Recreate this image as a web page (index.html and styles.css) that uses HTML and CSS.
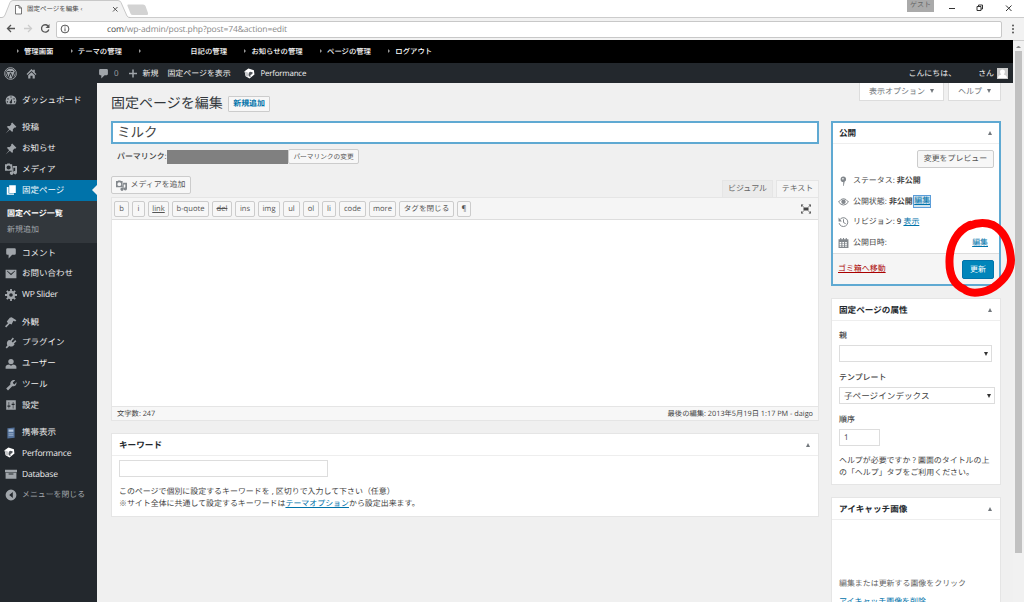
FILE: index.html
```html
<!DOCTYPE html>
<html lang="ja">
<head>
    <meta charset="UTF-8">
    <meta name="viewport" content="width=device-width, initial-scale=1.0">
    <title>固定ページを編集</title>
    <link rel="stylesheet" href="styles.css">
</head>
<body>
    <svg width="0" height="0" class="sprite">
        <symbol id="pin" viewBox="0 0 20 20"><path d="M12 1l7 7-2 1.500-1-.5-3 3c.7 2 0 3.500-1 4.500l-4-3.500-7 6 6-7-4-4c1-1 3-1.500 4.500-1l3-3L10 3z"/></symbol>
        <symbol id="media" viewBox="0 0 20 20"><path fill-rule="evenodd" d="M0 2h3l1-1h4l1 1h3v11H0zM6 4a3.500 3.500 0 1 0 0 7 3.500 3.500 0 0 0 0-7zM13 5h7v11a3 3 0 1 1-3-3V8h-3v9a3 3 0 1 1-4-3h2z"/></symbol>
        <symbol id="comment" viewBox="0 0 20 20"><path d="M4 2h12q2 0 2 2v7q0 2-2 2h-4l-6 6v-6H4q-2 0-2-2V4q0-2 2-2z"/></symbol>
        <symbol id="cube" viewBox="0 0 20 20"><path fill="#fff" d="M1 6l7-5 10 3 1 8-9 7-7-4z"/><path fill="#50555a" d="M9 8l3-1 4 1-1 3-4 2 2 2-3 1-2-3z"/><path fill="#c7c9cb" d="M1 6l6 2 1 8-5-2z"/></symbol>
    </svg>

    <div class="tabstrip">
        <svg class="tab-shape" width="150" height="19" viewBox="0 0 150 19">
            <path d="M0 17.500H2Q4 17.500 5 15L10 2.500Q11 .5 13 .5H118Q120 .5 121 2.500L127 16Q128 17.500 130 17.500V19H0z" fill="#f2f2f2" stroke="#bbb" stroke-width=".8"/>
            <path d="M0 18.500H150" stroke="#f2f2f2"/>
            <path d="M128 4.500h15q2 0 2.500 1.500l2.500 7q.5 2-1 2h-14q-2 0-2.500-1.500l-3-7.500q-.5-1.500.5-1.500z" fill="#d3d3d3"/>
            <path d="M15.500 5.500h3.500l2.500 2.500v6h-6zM19 5.500V8h2.500" fill="#fff" stroke="#555" stroke-width=".8"/>
            <path d="M113 7l4.500 4.500M117.500 7l-4.500 4.500" stroke="#555" stroke-width="1"/>
        </svg>
        <span class="tab-title">固定ページを編集 ‹</span>
        <span class="guest">ゲスト</span>
        <svg class="win" width="80" height="16" viewBox="0 0 80 16" fill="none" stroke="#333">
            <path d="M7 8.500h6M64 5.500l5.500 5.500M69.500 5.500l-5.500 5.500"/><path d="M35 6.500h4v4h-4zM36.500 6V5h4v4h-1.500"/>
        </svg>
    </div>
    <div class="toolbar">
        <svg width="56" height="22" viewBox="0 0 56 22" fill="none" stroke="#555" stroke-width="1.300">
            <path d="M15 10.500H7.500M11 7l-3.500 3.500L11 14"/><path stroke="#ccc" d="M24 10.500h7.500M28 7l3.500 3.500L28 14"/>
            <path d="M48 8a3.700 3.700 0 1 0 .8 3.500"/><path fill="#555" stroke="none" d="M49.500 6v4h-4z"/>
        </svg>
        <div class="url">
            <svg width="10" height="10" viewBox="0 0 10 10" fill="none" stroke="#555"><circle cx="5" cy="5" r="3.900"/><path d="M5 4.300v3M5 2.500v1"/></svg>
            <span class="address"><b>com</b>/wp-admin/post.php?post=74&amp;action=edit</span>
        </div>
        <svg width="22" height="22" viewBox="0 0 22 22" fill="#555"><circle cx="11" cy="7.500" r="1"/><circle cx="11" cy="11" r="1"/><circle cx="11" cy="14.500" r="1"/></svg>
    </div>

    <div class="window">
        <div class="page">
            <ul class="site-nav">
                <li>管理画面</li>
                <li>テーマの管理</li>
                <li class="blank">日記の管理</li>
                <li>お知らせの管理</li>
                <li>ページの管理</li>
                <li>ログアウト</li>
            </ul>
            <div class="adminbar">
                <svg class="wp" viewBox="0 0 20 20"><circle cx="10" cy="10" r="9" fill="none" stroke="#a0a5aa" stroke-width="1.500"/><circle cx="10" cy="10" r="7.500" fill="#a0a5aa"/><path d="M3 7l4 10 3-8 3.500 8L17 7M5 7h4M10 7h4" fill="none" stroke="#23282d" stroke-width="1.500"/></svg>
                <svg class="home" viewBox="0 0 20 20"><path d="M10 2l3 3V3h3v5l3 3-1.500 1.500L10 5.500l-7.500 7L1 11zM4 13l6-5.500 6 5.500v6h-4v-5H8v5H4z"/></svg>
                <svg class="bubble"><use href="#comment"/></svg>
                <span class="count">0</span>
                <svg class="plus" viewBox="0 0 20 20"><path d="M8.500 2h3v6.500H18v3h-6.500V18h-3v-6.500H2v-3h6.500z"/></svg>
                <span class="new">新規</span>
                <span class="view">固定ページを表示</span>
                <svg class="perf"><use href="#cube"/></svg>
                <span class="latin">Performance</span>
                <span class="hello">こんにちは、</span>
                <span class="san">さん</span>
                <svg class="avatar" viewBox="0 0 11 11"><path fill="#ccc" d="M0 0h11v11H0z"/><path fill="#fff" d="M5.500 1.500c3.500 0 2.500 4 1.200 5 2 .5 3.300 1.500 3.300 3.500H1c0-2 1.300-3 3.300-3.500-1.300-1-2.300-5 1.200-5z"/></svg>
            </div>
            <div class="body">
                <ul class="menu">
                    <li><svg viewBox="0 0 20 20"><path fill-rule="evenodd" d="M3 17a9 9 0 1 1 14 0zM9 4v2h2V4zM4 7v2h2V7zM14 7v2h2V7zM3 12v2h2v-2zM15 12v2h2v-2zM12 7l-3 5a2 2 0 1 0 2.500 1z"/></svg>ダッシュボード</li>
                    <li class="gap"><svg><use href="#pin"/></svg>投稿</li>
                    <li><svg><use href="#pin"/></svg>お知らせ</li>
                    <li><svg><use href="#media"/></svg>メディア</li>
                    <li class="current"><svg viewBox="0 0 20 20"><path d="M7 2h11v13H7zM3 5h3v11h9v2H3z"/></svg>固定ページ</li>
                    <li class="sub"><b>固定ページ一覧</b><span>新規追加</span></li>
                    <li><svg><use href="#comment"/></svg>コメント</li>
                    <li><svg viewBox="0 0 20 20"><path fill-rule="evenodd" d="M1 3h18v14H1zM3 5l7 7 7-7-1-.5-6 5-6-5z"/></svg>お問い合わせ</li>
                    <li class="latin"><svg viewBox="0 0 20 20"><circle cx="10" cy="10" r="5" fill="none" stroke="#a0a5aa" stroke-width="4"/><path d="M10 0v4M10 16v4M0 10h4M16 10h4M3 3l3 3M14 14l3 3M3 17l3-3M14 6l3-3" stroke="#a0a5aa" stroke-width="3"/></svg>WP Slider</li>
                    <li class="gap"><svg viewBox="0 0 20 20"><path d="M8 3l3-1 8 5-2 2-3-1-3 6-3-1-6 6-2-2 5-5-2-3z"/></svg>外観</li>
                    <li><svg viewBox="0 0 20 20"><path d="M13 1l2 2-4 4 2 2 4-4 2 2-4 4 1 1c-2 4-6 5-9 3l-4 4-2-2 3-3C2 10 4 6 7 5l2 1z"/></svg>プラグイン</li>
                    <li><svg viewBox="0 0 20 20"><circle cx="10" cy="6" r="4.500"/><path d="M1 18v-4q1-3 6-3l3 2 3-2q5 0 6 3v4z"/></svg>ユーザー</li>
                    <li><svg viewBox="0 0 20 20"><path d="M17 2l-4 4 1 2 2 1 3-4c1 5-3 8-7 7l-7 7-3-3 7-7c-1-4 3-8 8-7z"/></svg>ツール</li>
                    <li><svg viewBox="0 0 20 20"><path fill-rule="evenodd" d="M2 2h16v16H2zM6 5v6H4v2h2v3h1v-3h2v-2H7V5zM13 5v3h-2v2h2v6h1v-6h2V8h-2V5z"/></svg>設定</li>
                    <li class="gap"><svg viewBox="0 0 20 20"><path fill="#54729b" d="M4 2l12-1v17l-12 1z"/><path fill="#b5c8de" d="M6 4h8v4H6zM6 11h8v1H6zM6 14h8v1H6z"/></svg>携帯表示</li>
                    <li class="latin"><svg class="cube"><use href="#cube"/></svg>Performance</li>
                    <li class="latin"><svg viewBox="0 0 20 20"><path fill-rule="evenodd" d="M0 3h20v4H0zM1 8h18v10H1zM6 9v2h8V9z"/></svg>Database</li>
                    <li class="collapse"><svg viewBox="0 0 20 20"><path fill-rule="evenodd" d="M10 1a9 9 0 1 0 0 18 9 9 0 0 0 0-18zM13 5v10l-6-5z"/></svg>メニューを閉じる</li>
                </ul>

                <div class="content">
                    <div class="left">
                        <div class="heading"><h1>固定ページを編集</h1><a class="add-new">新規追加</a></div>
                        <div class="title">ミルク</div>
                        <div class="permalink"><span>パーマリンク:</span><i></i><a class="btn">パーマリンクの変更</a></div>
                        <div class="editor-top">
                            <a class="btn add-media"><svg><use href="#media"/></svg>メディアを追加</a>
                            <span class="tab visual">ビジュアル</span><span class="tab text">テキスト</span>
                        </div>
                        <div class="editor">
                            <div class="quicktags">
                                <a style="width:15px">b</a><a style="width:13px">i</a><a style="width:21px"><u>link</u></a><a style="width:37px">b-quote</a><a style="width:20px"><s>del</s></a><a style="width:20px">ins</a><a style="width:22px">img</a><a style="width:17px">ul</a><a style="width:16px">ol</a><a style="width:14px">li</a><a style="width:27px">code</a><a style="width:27px">more</a><a class="close-tag">タグを閉じる</a><a style="width:14px">¶</a>
                                <svg width="12" height="10" viewBox="0 0 12 10"><path d="M3.500 3.500h5v3h-5zM1 .5h2.500L1 3zM11 .5H8.500L11 3zM1 9.500h2.500L1 7zM11 9.500H8.500L11 7z"/><path d="M1.500 1l2.500 2.500M10.500 1L8 3.500M1.500 9L4 6.500M10.500 9L8 6.500" stroke="#777"/></svg>
                            </div>
                            <div class="textarea"></div>
                            <div class="status"><span>文字数: 247</span><span>最後の編集: 2013年5月19日 1:17 PM - daigo</span></div>
                        </div>
                        <div class="box keyword">
                            <h2>キーワード<em></em></h2>
                            <div class="input"></div>
                            <p>このページで個別に設定するキーワードを , 区切りで入力して下さい（任意）<br>※サイト全体に共通して設定するキーワードは<a>テーマオプション</a>から設定出来ます。</p>
                        </div>
                    </div>

                    <div class="right">
                        <div class="screen-meta"><span class="options">表示オプション<em></em></span><span class="help">ヘルプ<em></em></span></div>
                        <div class="box publish">
                            <h2>公開<em></em></h2>
                            <div class="preview"><a class="btn">変更をプレビュー</a></div>
                            <div class="row"><svg viewBox="0 0 20 20"><path d="M10 2a5 5 0 0 1 2 9.500L10.500 19h-1V12A5 5 0 0 1 10 2z"/><circle cx="9" cy="6" r="1.500" fill="#fff"/></svg>ステータス:&nbsp;<b>非公開</b></div>
                            <div class="row"><svg viewBox="0 0 20 20"><path d="M1 10q9-12 18 0-9 11-18 0z" fill="none" stroke="#82878c" stroke-width="1.800"/><circle cx="10" cy="9.500" r="4"/></svg>公開状態:&nbsp;<b>非公開</b><a class="focused">編集</a></div>
                            <div class="row"><svg viewBox="0 0 20 20"><path d="M3 6a8 8 0 1 1-1 6M10 5v6l4 2" fill="none" stroke="#82878c" stroke-width="1.800"/><path d="M1 2v7h6z"/></svg>リビジョン:&nbsp;<b class="num">9</b>&nbsp;<a>表示</a></div>
                            <div class="row"><svg viewBox="0 0 20 20"><path fill-rule="evenodd" d="M1 3h3V1h2v2h3V1h2v2h3V1h2v2h3v16H1zM3 8v2h3V8zM8 8v2h3V8zM13 8v2h3V8zM3 11v3h3v-3zM8 11v3h3v-3zM13 11v3h3v-3zM3 15v2h3v-2zM8 15v2h3v-2zM13 15v2h3v-2z"/></svg>公開日時:<a class="edit-date">編集</a></div>
                            <div class="actions"><a class="trash">ゴミ箱へ移動</a><a class="update">更新</a></div>
                        </div>
                        <div class="box attributes">
                            <h2>固定ページの属性<em></em></h2>
                            <label>親</label>
                            <div class="select parent"><em></em></div>
                            <label>テンプレート</label>
                            <div class="select">子ページインデックス<em></em></div>
                            <label>順序</label>
                            <div class="order">1</div>
                            <p>ヘルプが必要ですか ? 画面のタイトルの上<br>の「ヘルプ」タブをご利用ください。</p>
                        </div>
                        <div class="box thumbnail">
                            <h2>アイキャッチ画像<em></em></h2>
                            <p>編集または更新する画像をクリック</p>
                            <a>アイキャッチ画像を削除</a>
                        </div>
                    </div>
                </div>
            </div>
        </div>
        <div class="scrollbar"><em></em><div class="thumb"></div></div>
    </div>
    <svg class="mark" width="74" height="84" viewBox="0 0 74 84"><path d="M27 9C14 15 7 28 6.500 44C6 60 12 69 21 73C27 79 42 77 51 71C61 64 68 55 68 44C67 28 61 15 50 9C42 6 33 7 26 10"/></svg>
</body>
</html>
```
FILE: styles.css
```css
*{
    box-sizing: border-box;
    margin:0;
    padding:0;
}
body{
    width:1024px;
    height:602px;
    overflow: hidden;
    background: #f0f0f0;
    color:#444;
    font-family: "Open Sans","Noto Sans CJK JP",sans-serif;
    font-size:7.95px;
    line-height: 14px;
    white-space: nowrap;
    text-rendering: geometricPrecision;
}
ul{
    list-style-type: none;
}
svg{
    flex:none;
}
a{
    color:#0073aa;
    text-decoration: underline;
}
.sprite{
    position: absolute;
}
.latin{
    letter-spacing: -.2px;
}
/* browser */
.tabstrip{
    display: flex;
    height:18px;
    background: #fff;
    border-bottom: 1px solid #ccc;
}
.tab-shape{
    margin-right: -123px;
}
.tab-title{
    position: relative;
    width:882px;
    font-size:6.5px;
    line-height: 18px;
}
.guest{
    width:27px;
    height:12px;
    margin-left: -2px;
    background: #aaa;
    color:#666;
    font-size:7px;
    line-height: 11px;
    text-align: center;
}
.win{
    margin-left: 8px;
}
.toolbar{
    display: flex;
    align-items: center;
    height:22px;
    background: #f2f2f2;
}
.url{
    display: flex;
    align-items: center;
    width:946px;
    height:17px;
    padding-left:3px;
    background: #fff;
    border: 1px solid #c8c8c8;
    border-radius: 2px;
}
.address{
    margin-left: 37px;
    padding-top: 1px;
    color:#888;
    font-size:8.5px;
    letter-spacing: -.11px;
}
.address b{
    color:#444;
    font-weight: normal;
}
.window{
    display: flex;
    height:562px;
}
.page{
    width:1013px;
}
.scrollbar{
    width:11px;
    padding:5px 2px 0;
    background: #f1f1f1;
    border-top: 1px solid #ccc;
}
.scrollbar em{
    display: block;
    margin:0 1px 3px;
    border: 2px solid transparent;
    border-top: 0;
    border-bottom: 2px solid #888;
}
.thumb{
    height:502px;
    background: #c1c1c1;
}
/* black nav */
.site-nav{
    display: flex;
    gap:17.4px;
    height:23px;
    padding-left:17px;
    background: #000;
    color:#fff;
    font-size:7.35px;
    font-weight: 500;
    line-height: 24px;
}
.site-nav li::before{
    content:"";
    display: inline-block;
    margin-right: 5px;
    border: 2px solid transparent;
    border-left: 2px solid #999;
    border-right: 0;
    vertical-align: 1px;
}
.site-nav .blank::before{
    margin-right: 49px;
}
.adminbar{
    display: flex;
    align-items: center;
    height:20px;
    background: #23282d;
    color:#eee;
    fill:#a0a5aa;
}
.adminbar span{
    padding-top: 1px;
}
.adminbar svg{
    width:11px;
    height:11px;
}
.adminbar .wp{
    width:13px;
    height:13px;
    margin-left:4px;
}
.adminbar .home{
    margin-left: 9px;
}
.adminbar .bubble{
    margin-left: 61px;
}
.count{
    width:12px;
    margin-left: 5px;
    color:#a0a5aa;
}
.adminbar .plus{
    width:10px;
    margin-left: 2px;
}
.new{
    margin-left: 4.5px;
}
.view{
    width:77px;
    margin-left: 9px;
}
.perf{
    margin-right: 5px;
}
.hello{
    margin-left: auto;
}
.san{
    margin:0 3px 0 22px;
}
.avatar{
    margin-right: 5px;
}
.body{
    display: flex;
    height:519px;
}
/* side menu */
.menu{
    width:97px;
    padding-top: 7px;
    background: #23282d;
    color:#eee;
    font-size:8.5px;
    line-height: 15px;
    fill:#a0a5aa;
}
.menu li{
    display: flex;
    align-items: center;
    height:20.8px;
    padding-left:5px;
}
.menu svg{
    width:12px;
    height:12px;
    margin-right: 5px;
}
.menu .cube{
    width:11px;
    height:11px;
    margin:0 7px 2px -1px;
}
.menu .gap{
    margin-top: 6.7px;
}
.menu .current{
    position: relative;
    background: #0073aa;
    color:#fff;
    fill:#fff;
}
.current::after{
    content:"";
    position: absolute;
    right:0;
    top:5.500px;
    border: 5px solid transparent;
    border-left: 0;
    border-right: 5px solid #f1f1f1;
}
.menu .sub{
    display: block;
    height:42px;
    padding:5px 7px;
    background: #32373c;
    font-size:8px;
    line-height: 16.5px;
}
.sub b,.sub span{
    display: block;
}
.sub b{
    color:#fff;
}
.sub span,.menu .collapse{
    color:#a0a5aa;
}
.menu .collapse{
    font-size:7.9px;
}
/* content */
.content{
    display: flex;
    gap:12px;
    padding-left:14px;
}
.left{
    width:708px;
}
.right{
    width:170px;
}
.heading{
    display: flex;
    align-items: center;
    height:38px;
    padding-top: 4px;
}
h1{
    color:#32373c;
    font-size:14px;
    font-weight: normal;
    line-height: 16px;
}
.add-new{
    margin-left: 5px;
    padding:0 4.5px;
    border: 1px solid #ccc;
    border-radius: 1px;
    background: #f7f7f7;
    font-weight: bold;
    text-decoration: none;
}
.title{
    height:23px;
    padding-left:4px;
    border: 2px solid #5fa9d2;
    background: #fff;
    font-size:13.5px;
    line-height: 18px;
}
.permalink{
    display: flex;
    align-items: center;
    height:15px;
    margin-top: 5px;
    padding-left:6px;
}
.permalink span{
    width:50px;
    font-weight: 500;
}
.permalink i{
    width:121px;
    height:14px;
    background: #808080;
}
.btn{
    display: flex;
    align-items: center;
    justify-content: center;
    border: 1px solid #ccc;
    border-radius: 2px;
    background: #f7f7f7;
    color:#555;
    text-decoration: none;
}
.permalink .btn{
    width:71px;
    height:15px;
    font-size:6.7px;
}
.editor-top{
    display: flex;
    align-items: flex-end;
    height:33px;
}
.add-media{
    width:80px;
    height:18px;
    margin:0 auto 3px 0;
}
.add-media svg{
    width:11px;
    height:11px;
    margin-right: 3px;
    fill:#82878c;
}
.tab{
    height:17px;
    border: 1px solid #e5e5e5;
    border-bottom: 0;
    color:#666;
    line-height: 17px;
    text-align: center;
}
.visual{
    width:51px;
    margin-right: 3px;
    background: #ebebeb;
}
.text{
    width:43px;
    background: #f5f5f5;
}
.editor{
    height:224px;
    border: 1px solid #e5e5e5;
}
.quicktags{
    display: flex;
    gap:3px;
    height:22px;
    padding:3px 5px 3px 2px;
    background: #f5f5f5;
    border-bottom: 1px solid #ddd;
}
.quicktags a{
    height:16px;
    border: 1px solid #ccc;
    border-radius: 2px;
    background: #f7f7f7;
    color:#555;
    font-size:7.6px;
    line-height: 15px;
    text-align: center;
    text-decoration: none;
}
.quicktags .close-tag{
    width:55px;
}
.quicktags svg{
    margin:3px 1px 0 auto;
    fill:#444;
}
.textarea{
    height:186px;
    background: #fff;
}
.status{
    display: flex;
    justify-content: space-between;
    height:14px;
    padding:0 5px;
    border-top: 1px solid #e5e5e5;
    background: #f7f7f7;
    font-size:7.3px;
    line-height: 15px;
}
.box{
    border: 1px solid #e5e5e5;
    background: #fff;
}
h2{
    display: flex;
    align-items: center;
    justify-content: space-between;
    height:22px;
    padding:0 8px 0 7px;
    border-bottom: 1px solid #eee;
    color:#23282d;
    font-size:8.6px;
    font-weight: bold;
    line-height: 12px;
}
h2 em{
    border: 2.500px solid transparent;
    border-top: 0;
    border-bottom: 4px solid #72777c;
}
.keyword{
    height:84px;
    margin-top: 12px;
}
.input{
    width:209px;
    height:17px;
    margin:4px 7px 9px;
    border: 1px solid #ddd;
}
.keyword p{
    padding-left:7px;
    line-height: 12px;
}
.screen-meta{
    display: flex;
    gap:4px;
    justify-content: flex-end;
    height:38px;
}
.screen-meta span{
    height:18px;
    border: 1px solid #ddd;
    border-top: 0;
    background: #fff;
    color:#72777c;
    font-size:8px;
    line-height: 18px;
    text-align: center;
}
.screen-meta .options{
    width:85px;
}
.screen-meta .help{
    width:53px;
}
.screen-meta em,.select em{
    display: inline-block;
    border: 2.500px solid transparent;
    border-top: 4px solid #72777c;
    border-bottom: 0;
}
.screen-meta em{
    margin-left: 5px;
    vertical-align: 1px;
}
/* publish */
.publish{
    height:165px;
    border: 2px solid #5fa9d2;
}
.publish h2{
    height:21px;
    padding:0 7px 0 6px;
}
.preview{
    height:26px;
    padding:6px 5px 0 0;
}
.preview .btn{
    width:77px;
    height:18px;
    margin-left: auto;
}
.row{
    display: flex;
    align-items: center;
    height:20.7px;
    padding:1px 7px 0 5px;
}
.row svg{
    width:11px;
    height:12px;
    margin-right: 4px;
    fill:#82878c;
}
.focused{
    height:11px;
    margin-left: 1.5px;
    background: #d3e4ef;
    line-height: 11px;
    outline: 1px solid #5b9dd9;
}
.row .num{
    font-weight: 600;
}
.edit-date{
    margin-left: auto;
    margin-right: 4px;
}
.actions{
    display: flex;
    align-items: center;
    justify-content: space-between;
    height:31px;
    padding:1px 5px 0;
    border-top: 1px solid #ddd;
    background: #f5f5f5;
}
.trash{
    color:#a00;
}
.update{
    width:32px;
    height:19px;
    border: 1px solid #0073aa;
    border-radius: 2px;
    background: #0085ba;
    color:#fff;
    line-height: 18px;
    text-align: center;
    text-decoration: none;
}
.attributes{
    height:187px;
    margin-top: 12px;
}
.attributes h2{
    margin-bottom: 8px;
}
label{
    display: block;
    height:16px;
    padding-left:7px;
    font-weight: 500;
}
.select{
    display: flex;
    align-items: center;
    justify-content: space-between;
    width:156px;
    height:17px;
    margin:0 0 9px 7px;
    padding:0 3px 0 4px;
    border: 1px solid #ddd;
    font-size:8.6px;
    line-height: 12px;
}
.parent{
    width:153px;
}
.select em{
    margin-left: auto;
    border-top-color: #333;
}
.order{
    width:41px;
    height:17px;
    margin:0 0 9px 7px;
    padding-left:4px;
    border: 1px solid #ddd;
    line-height: 16px;
}
.attributes p{
    padding-left:7px;
    line-height: 12px;
}
.thumbnail{
    height:120px;
    margin-top: 12px;
}
.thumbnail p{
    margin:57px 0 4px 7px;
    color:#666;
}
.thumbnail a{
    margin-left: 7px;
    text-decoration: none;
}
/* red pen circle over the update button */
.mark{
    position: absolute;
    left:943px;
    top:216px;
    fill:none;
    stroke:#f00;
    stroke-width:8px;
    stroke-linecap: round;
}
```
